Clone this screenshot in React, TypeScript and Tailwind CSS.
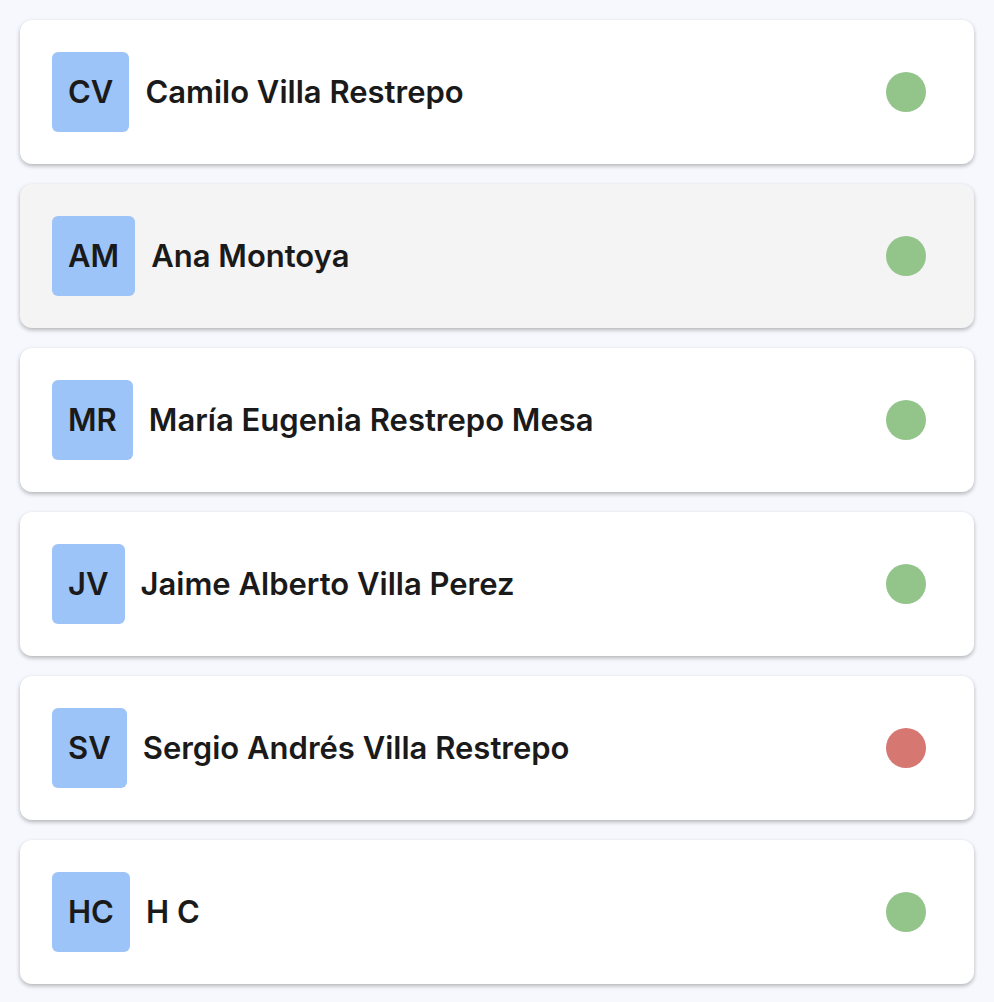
import React from "react";

const people = [
  { ini: "CV", name: "Camilo Villa Restrepo", on: true, bg: "bg-white" },
  { ini: "AM", name: "Ana Montoya", on: true, bg: "bg-[#f4f4f4]" },
  { ini: "MR", name: "María Eugenia Restrepo Mesa", on: true, bg: "bg-white" },
  { ini: "JV", name: "Jaime Alberto Villa Perez", on: true, bg: "bg-white" },
  { ini: "SV", name: "Sergio Andrés Villa Restrepo", on: false, bg: "bg-white" },
  { ini: "HC", name: "H C", on: true, bg: "bg-white" },
];

export default function App() {
  return (
    <div className="min-h-[1002px] bg-[#f7f8fd] px-5 py-5 font-['Inter',sans-serif] text-[#1a1a1a]">
      <div className="flex flex-col gap-5">
        {people.map((p) => (
          <div
            key={p.ini}
            className={`${p.bg} flex h-[144px] items-center rounded-xl pl-8 pr-12 shadow-[0_2px_4px_rgba(0,0,0,0.28)]`}
          >
            <div className="flex h-20 items-center rounded-md bg-[#9dc4f8] px-4 text-[31px] font-semibold">
              {p.ini}
            </div>
            <div className="ml-4 flex-1 text-[31px] font-semibold">{p.name}</div>
            <div className={`h-10 w-10 rounded-full ${p.on ? "bg-[#93c58b]" : "bg-[#d77772]"}`} />
          </div>
        ))}
      </div>
    </div>
  );
}
